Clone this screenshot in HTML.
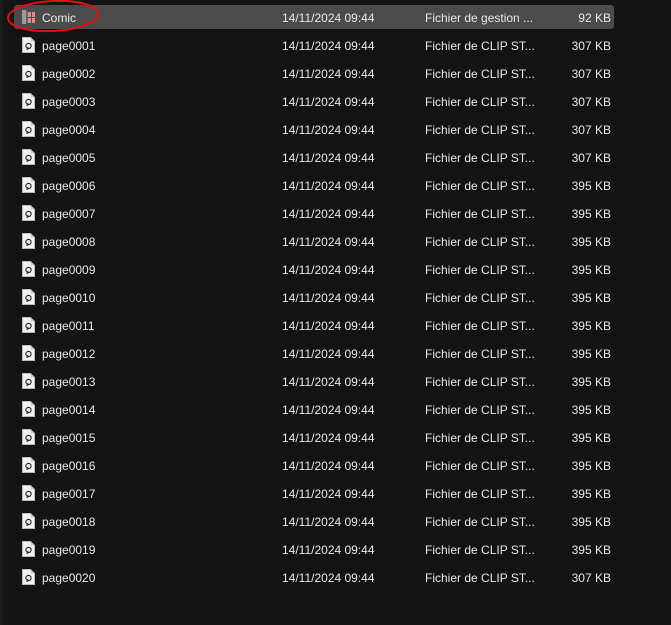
<!DOCTYPE html>
<html><head><style>
body{margin:0;width:671px;height:625px;background:#131313;overflow:hidden;font-family:"Liberation Sans",sans-serif;font-size:12px;color:#e8e8e8;position:relative}
.strip{position:absolute;left:0;top:0;width:3px;height:625px;background:#1c1c1c}
.row{position:absolute;left:14px;width:600px;height:24px}
.sel{background:#4b4b4b;border-radius:3px}
.row span{position:absolute;top:6px;white-space:nowrap}
.n{left:28px}.d{left:268px}.t{left:411px}.s{right:3px}
.ic{position:absolute;left:8px;top:4px;width:13px;height:16px}
</style></head><body>
<div class="strip"></div>
<div class="row sel" style="top:5px">
<svg class="ic" viewBox="0 0 13 16"><rect x="0" y="1" width="4" height="14" fill="#9a9a9a"/><rect x="4" y="2" width="2" height="12" fill="#666"/><rect x="6" y="3" width="7" height="11" fill="#e58a86"/><path d="M6 8.5h7M9.5 3v11" stroke="#4b4b4b" stroke-width="1"/></svg>
<span class="n">Comic</span><span class="d">14/11/2024 09:44</span><span class="t">Fichier de gestion ...</span><span class="s">92 KB</span></div>
<svg style="position:absolute;left:0;top:0" width="120" height="40"><ellipse cx="53" cy="16" rx="45" ry="15" fill="none" stroke="#e01010" stroke-width="2" transform="rotate(-3 53 16)"/></svg>
<div id="rows"></div>
<script>
var s=['307','307','307','307','307','395','395','395','395','395','395','395','395','395','395','395','395','395','395','307'];
var h='';for(var i=0;i<20;i++){var n=('000'+(i+1)).slice(-4);
h+='<div class="row" style="top:'+(33+28*i)+'px"><svg class="ic" viewBox="0 0 13 16"><path d="M0.5 0.5h8l4 4v11h-12z" fill="#f2f2f2" stroke="#bbb"/><path d="M8.5 0.5v4h4" fill="#ccc"/><circle cx="6.5" cy="9" r="2.6" fill="none" stroke="#333" stroke-width="1.2"/><path d="M6 10l-1 3" stroke="#333" stroke-width="1.2"/></svg><span class="n">page'+n+'</span><span class="d">14/11/2024 09:44</span><span class="t">Fichier de CLIP ST...</span><span class="s">'+s[i]+' KB</span></div>';}
document.getElementById('rows').innerHTML=h;
</script>
</body></html>
